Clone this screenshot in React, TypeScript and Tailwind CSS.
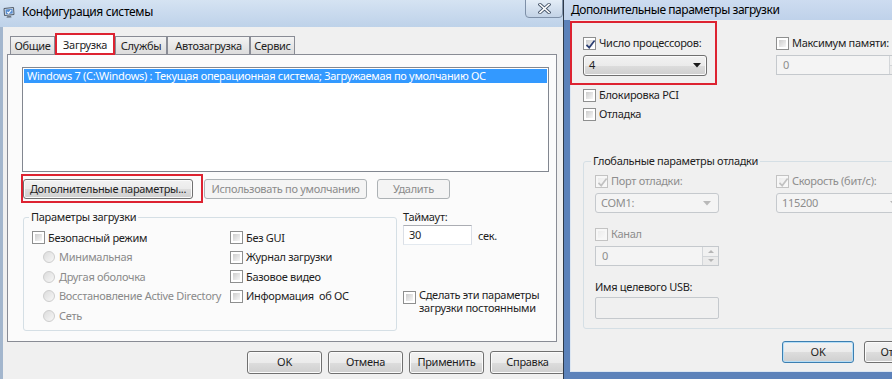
import React from "react";

function Check({ checked = false, disabled = false }: { checked?: boolean; disabled?: boolean }) {
  return (
    <span
      className={`relative inline-flex w-[13px] h-[13px] shrink-0 border p-[2px] ${
        disabled ? "border-[#c3c3c3] bg-[#f7f7f7]" : "border-[#8e8f8f] bg-white"
      }`}
    >
      <span
        className={`flex-1 ${
          disabled ? "bg-linear-to-br from-[#ececec] to-[#f8f8f8]" : "bg-linear-to-br from-[#cdcdcd] to-[#f7f7f7]"
        }`}
      />
      {checked && (
        <svg className="absolute left-[1px] top-[1px]" width="11" height="11" viewBox="0 0 11 11">
          <path
            d="M1.5 5.8 L4.2 8.6 L9.6 1.6"
            fill="none"
            stroke={disabled ? "#c2c2c2" : "#2c3f73"}
            strokeWidth="1.7"
          />
        </svg>
      )}
    </span>
  );
}

function Radio() {
  return (
    <span className="w-[12px] h-[12px] shrink-0 rounded-full border border-[#cdcdcd] bg-linear-to-br from-[#dcdcdc] to-[#f7f7f7]" />
  );
}

function Btn({
  children,
  className = "",
  disabled = false,
  isDefault = false,
}: {
  children: React.ReactNode;
  className?: string;
  disabled?: boolean;
  isDefault?: boolean;
}) {
  const look = disabled
    ? "border-[#adb2b5] bg-[#f4f4f4] text-[#8b8b8b]"
    : isDefault
    ? "border-[#3c7fb1] bg-[linear-gradient(#f2f2f2,#ebebeb_50%,#dddddd_51%,#cfcfcf)] shadow-[inset_0_0_0_1px_#b6def7] text-[#1e1e1e]"
    : "border-[#707070] bg-[linear-gradient(#f2f2f2,#ebebeb_50%,#dddddd_51%,#cfcfcf)] shadow-[inset_0_0_0_1px_#fbfbfb] text-[#1e1e1e]";
  return (
    <div className={`flex items-center justify-center shrink-0 rounded-[3px] border text-[11px] whitespace-nowrap ${look} ${className}`}>
      {children}
    </div>
  );
}

function Arrow({ color }: { color: string }) {
  return (
    <svg width="8" height="5" viewBox="0 0 8 5">
      <path d="M0 0 H8 L4 4.5 Z" fill={color} />
    </svg>
  );
}

function Spin({ className = "" }: { className?: string }) {
  return (
    <div className={`flex border border-[#c5c9cd] bg-[#f4f4f4] ${className}`}>
      <span className="flex-1 pl-[6px] text-[11px] leading-[18px] text-[#8d8d8d]">0</span>
      <div className="w-[16px] flex flex-col border-l border-[#d3d6d9]">
        <div className="flex-1 flex items-center justify-center border-b border-[#d3d6d9] bg-[#f1f1f1]">
          <svg width="6" height="3" viewBox="0 0 6 3">
            <path d="M0 3 L3 0 L6 3 Z" fill="#b5b5b5" />
          </svg>
        </div>
        <div className="flex-1 flex items-center justify-center bg-[#ebebeb]">
          <svg width="6" height="3" viewBox="0 0 6 3">
            <path d="M0 0 L3 3 L6 0 Z" fill="#b5b5b5" />
          </svg>
        </div>
      </div>
    </div>
  );
}

function DisabledCombo({ value, className = "" }: { value: string; className?: string }) {
  return (
    <div className={`flex items-center rounded-[3px] border border-[#c5c9cd] bg-[#f4f4f4] ${className}`}>
      <span className="flex-1 pl-[5px] text-[11px] text-[#8d8d8d]">{value}</span>
      <span className="pr-[7px] flex">
        <Arrow color="#b9b9b9" />
      </span>
    </div>
  );
}

function Tab({ label, w }: { label: string; w: string }) {
  return (
    <div
      className={`${w} h-[18px] flex items-center justify-center border-t border-l border-r border-[#898c95] bg-linear-to-b from-[#f3f3f3] to-[#dcdcdc] text-[11px] leading-none`}
    >
      {label}
    </div>
  );
}

function SysConfig() {
  return (
    <div className="w-[563px] shrink-0 flex flex-col">
      <div className="h-[27px] flex items-start bg-linear-to-b from-[#d5e3f2] via-[#c9daee] to-[#bed2e9]">
        <svg className="ml-[3px] mt-[7px]" width="12" height="11" viewBox="0 0 12 11">
          <path d="M1 1.5 L10.5 0.5 L11 7.5 L1.5 8.5 Z" fill="#dfe6ee" stroke="#4e5a68" strokeWidth="1" />
          <path d="M2.5 2.5 L9.5 1.8 L9.8 6.5 L2.8 7.2 Z" fill="#5b8fd0" />
          <path d="M4 9.2 L8 8.8 L8.5 10.5 L3.5 10.8 Z" fill="#6c7682" />
          <path d="M4.2 4.8 L5.6 6.1 L8.2 3" fill="none" stroke="#ffffff" strokeWidth="1.1" />
        </svg>
        <span className="ml-[7px] mt-[4px] text-[12px] tracking-[-0.35px] leading-[16px] text-black">
          Конфигурация системы
        </span>
        <div className="ml-auto w-[38px] h-[19px] -mt-[1px] flex items-center justify-center rounded-b-[4px] border border-[#7e90a8] bg-linear-to-b from-[#e4edf7] to-[#c3d3e6]">
          <svg width="13" height="11" viewBox="0 0 13 11">
            <path d="M2 1.5 L11 9.5 M11 1.5 L2 9.5" stroke="#46556a" strokeWidth="3.4" strokeLinecap="square" />
            <path d="M2 1.5 L11 9.5 M11 1.5 L2 9.5" stroke="#ffffff" strokeWidth="1.6" strokeLinecap="square" />
          </svg>
        </div>
      </div>

      <div className="flex-1 flex border-l-[3px] border-[#a3b6cd]">
        <div className="flex-1 flex flex-col bg-[#f0f0f0]">
          <div className="mt-[6px] ml-[7px] h-[21px] flex items-end">
            <Tab label="Общие" w="w-[45px]" />
            <div className="relative z-10 w-[60px] h-[22px] -mb-[1px] flex items-start justify-center pt-[2px] border-2 border-[#dd2331] bg-white text-[11px]">
              Загрузка
            </div>
            <Tab label="Службы" w="w-[52px]" />
            <Tab label="Автозагрузка" w="w-[83px]" />
            <Tab label="Сервис" w="w-[45px]" />
          </div>

          <div className="ml-[4px] w-[550px] h-[288px] border border-[#898c95] bg-[#fbfbfb] flex flex-col">
            <div className="ml-[14px] mt-[12px] w-[527px] h-[105px] border border-[#828790] bg-white p-[1px]">
              <div className="h-[14px] bg-[#3399ff] pl-[3px] text-[11px] leading-[14px] text-white whitespace-nowrap">
                Windows 7 (C:\Windows) : Текущая операционная система; Загружаемая по умолчанию ОС
              </div>
            </div>

            <div className="ml-[15px] mt-[7px] flex">
              <div className="relative">
                <Btn className="w-[170px] h-[20px]">Дополнительные параметры...</Btn>
                <div className="absolute -left-[2px] -top-[5px] w-[182px] h-[29px] border-2 border-[#dd2331]" />
              </div>
              <Btn disabled className="ml-[11px] w-[163px] h-[20px]">
                Использовать по умолчанию
              </Btn>
              <Btn disabled className="ml-[10px] w-[73px] h-[20px]">
                Удалить
              </Btn>
            </div>

            <div className="ml-[15px] mt-[10px] flex">
              <fieldset className="w-[374px] h-[122px] border border-[#d5dfe5] rounded-[3px] px-0">
                <legend className="ml-[5px] px-[2px] text-[11px] leading-[16px]">Параметры загрузки</legend>
                <div className="pt-[3px] pl-[8px] grid grid-cols-[198px_1fr] text-[11px]">
                  <div className="flex flex-col">
                    <div className="h-[19.5px] flex items-center gap-[3px]">
                      <Check />
                      <span>Безопасный режим</span>
                    </div>
                    {["Минимальная", "Другая оболочка", "Восстановление Active Directory", "Сеть"].map((t) => (
                      <div key={t} className="h-[19.5px] flex items-center gap-[4px] pl-[11px] text-[#8a8a8a] whitespace-nowrap">
                        <Radio />
                        <span>{t}</span>
                      </div>
                    ))}
                  </div>
                  <div className="flex flex-col">
                    {["Без GUI", "Журнал загрузки", "Базовое видео", "Информация  об ОС"].map((t) => (
                      <div key={t} className="h-[19.5px] flex items-center gap-[3px] whitespace-pre">
                        <Check />
                        <span>{t}</span>
                      </div>
                    ))}
                  </div>
                </div>
              </fieldset>

              <div className="ml-[6px] flex flex-col text-[11px]">
                <span className="leading-[16px]">Таймаут:</span>
                <div className="flex items-center">
                  <div className="w-[69px] h-[20px] border border-[#abadb3] border-l-[#dbdfe6] border-r-[#dbdfe6] border-b-[#e3e9ef] bg-white pl-[5px] leading-[18px]">
                    30
                  </div>
                  <span className="ml-[6px] mt-[2px]">сек.</span>
                </div>
                <div className="mt-[43px] flex gap-[3px]">
                  <span className="mt-[0.5px]">
                    <Check />
                  </span>
                  <span className="leading-[13px] whitespace-nowrap">
                    Сделать эти параметры
                    <br />
                    загрузки постоянными
                  </span>
                </div>
              </div>
            </div>
          </div>

          <div className="pt-[9px] pl-[244px] flex gap-[6px]">
            <Btn className="w-[75px] h-[23px]">OK</Btn>
            <Btn className="w-[75px] h-[23px]">Отмена</Btn>
            <Btn className="w-[75px] h-[23px]">Применить</Btn>
            <Btn className="w-[75px] h-[23px]">Справка</Btn>
          </div>
        </div>
      </div>
    </div>
  );
}

function AdvancedBoot() {
  return (
    <div className="flex-1 min-w-0 flex flex-col border-l border-[#2e3a4a] bg-[#5c82ba]">
      <div className="h-[20px] pl-[7px] flex items-center bg-linear-to-b from-[#cddcf0] to-[#bfd2ea] text-[12px] tracking-[-0.45px] text-black whitespace-nowrap">
        Дополнительные параметры загрузки
      </div>
      <div className="flex-1 flex pl-[6px] pb-[7px]">
        <div className="relative flex-1 min-w-0 flex flex-col bg-[#f0f0f0] border-l border-b border-[#dce6f2] text-[11px] text-[#1e1e1e] whitespace-nowrap">
          <div className="absolute -left-[1px] top-[1px] w-[147px] h-[64px] border-2 border-[#dd2331]" />

          <div className="pl-[12px] pt-[15px] grid grid-cols-[193px_1fr]">
            <div className="flex flex-col">
              <div className="h-[16px] flex items-center gap-[3px]">
                <Check checked />
                <span>Число процессоров:</span>
              </div>
              <div className="mt-[4px] w-[124px] h-[21px] flex items-center rounded-[3px] border border-[#707070] bg-[linear-gradient(#f2f2f2,#ebebeb_50%,#dddddd_51%,#cfcfcf)] shadow-[inset_0_0_0_1px_#fbfbfb]">
                <span className="flex-1 pl-[5px]">4</span>
                <span className="pr-[5px] flex">
                  <Arrow color="#1a1a1a" />
                </span>
              </div>
            </div>
            <div className="flex flex-col">
              <div className="h-[16px] flex items-center gap-[3px]">
                <Check />
                <span>Максимум памяти:</span>
              </div>
              <Spin className="mt-[4px] w-[130px] h-[20px]" />
            </div>
          </div>

          <div className="pl-[12px] mt-[11px] flex flex-col">
            <div className="h-[16px] flex items-center gap-[3px]">
              <Check />
              <span>Блокировка PCI</span>
            </div>
            <div className="mt-[3px] h-[16px] flex items-center gap-[3px]">
              <Check />
              <span>Отладка</span>
            </div>
          </div>

          <fieldset className="ml-[12px] mt-[31px] w-[330px] h-[176px] border border-[#d5dfe5] rounded-[3px]">
            <legend className="ml-[7px] px-[2px] leading-[16px]">Глобальные параметры отладки</legend>
            <div className="pl-[11px] pt-[4px] grid grid-cols-[181px_1fr]">
              <div className="flex flex-col">
                <div className="h-[16px] flex items-center gap-[3px] text-[#8d8d8d]">
                  <Check checked disabled />
                  <span>Порт отладки:</span>
                </div>
                <DisabledCombo value="COM1:" className="mt-[4px] w-[124px] h-[20px]" />
              </div>
              <div className="flex flex-col">
                <div className="h-[16px] flex items-center gap-[3px] text-[#8d8d8d]">
                  <Check checked disabled />
                  <span>Скорость (бит/с):</span>
                </div>
                <DisabledCombo value="115200" className="mt-[4px] w-[130px] h-[20px]" />
              </div>
            </div>
            <div className="pl-[11px] mt-[13px] flex flex-col">
              <div className="h-[16px] flex items-center gap-[3px] text-[#8d8d8d]">
                <Check disabled />
                <span>Канал</span>
              </div>
              <Spin className="mt-[4px] w-[124px] h-[20px]" />
              <span className="mt-[13px] leading-[16px]">Имя целевого USB:</span>
              <div className="mt-[2px] w-[124px] h-[22px] rounded-[2px] border border-[#c5c9cd] bg-[#f0f0f0]" />
            </div>
          </fieldset>

          <div className="mt-[12px] pl-[211px] flex gap-[10px]">
            <Btn isDefault className="w-[72px] h-[22px]">
              OK
            </Btn>
            <Btn className="w-[72px] h-[22px]">Отмена</Btn>
          </div>
        </div>
      </div>
    </div>
  );
}

export default function App() {
  return (
    <div className="w-[892px] h-[379px] flex overflow-hidden bg-[#f0f0f0] font-['Noto_Sans',sans-serif] tracking-[-0.3px] text-[#1e1e1e]">
      <SysConfig />
      <AdvancedBoot />
    </div>
  );
}
